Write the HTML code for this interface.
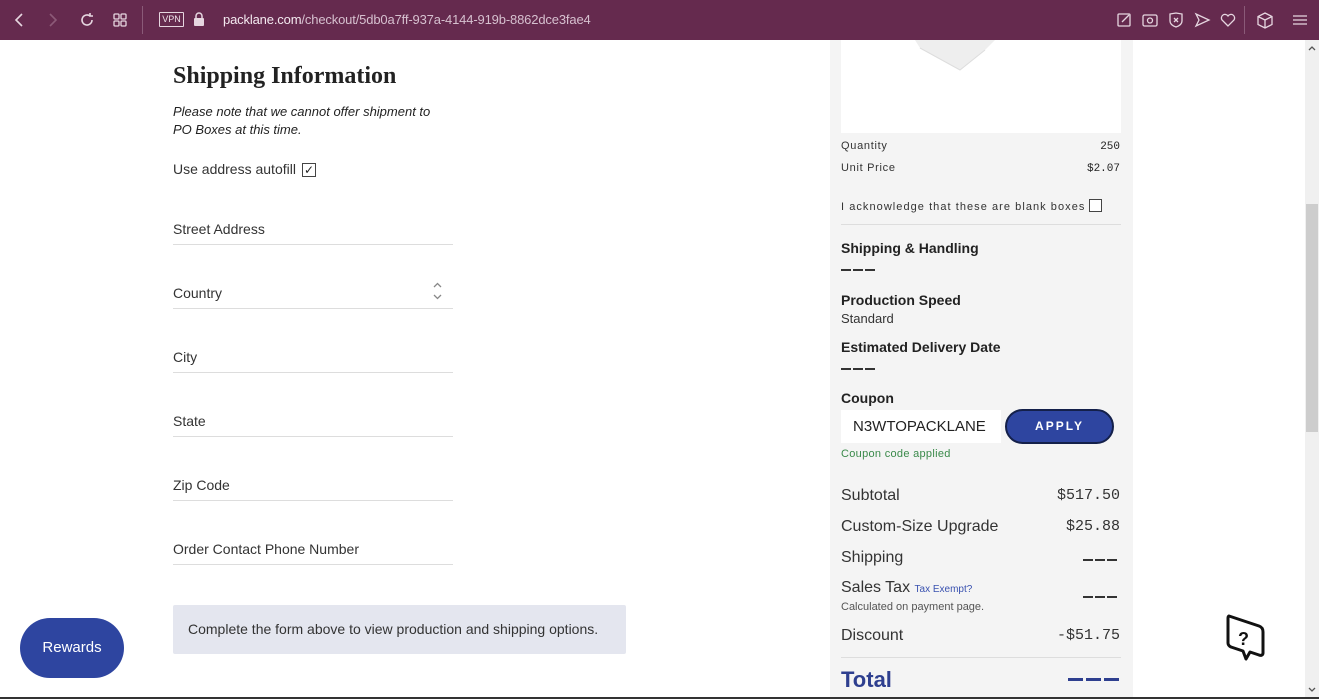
<!DOCTYPE html>
<html><head><meta charset="utf-8"><style>
*{margin:0;padding:0;box-sizing:border-box}
body{width:1319px;height:699px;overflow:hidden;background:#fff;font-family:"Liberation Sans",sans-serif;color:#222;position:relative}
.bar{position:absolute;left:0;top:0;width:1319px;height:40px;background:#652a4e;color:#f0e4ec}
.abs{position:absolute}
.lab{position:absolute;left:173px;width:280px;font-size:14px;color:#333;border-bottom:1px solid #ddd;padding-bottom:7px}
.side{position:absolute;left:830px;top:40px;width:303px;height:659px;background:#f4f4f4}
.mono{font-family:"Liberation Mono",monospace}
.sb{position:absolute;left:11px;font-size:14px;font-weight:bold;color:#222}
.row{position:absolute;left:11px;width:279px;font-size:16px;color:#333}
.row span.r{position:absolute;right:0;font-family:"Liberation Mono",monospace;font-size:15px}
.d{position:absolute;display:flex;gap:2px}
.d i{display:block;width:10px;height:1.5px;background:#333}
</style></head><body>
<div class="bar">
<svg class="abs" style="left:12px;top:12px" width="16" height="16" viewBox="0 0 16 16" fill="none" stroke="#e6d6e0" stroke-width="1.6"><path d="M10 2L4 8l6 6"/></svg>
<svg class="abs" style="left:44px;top:12px" width="16" height="16" viewBox="0 0 16 16" fill="none" stroke="#8c5a78" stroke-width="1.6"><path d="M6 2l6 6-6 6"/></svg>
<svg class="abs" style="left:78px;top:11px" width="18" height="18" viewBox="0 0 18 18" fill="none" stroke="#e6d6e0" stroke-width="1.6"><path d="M14 9a5 5 0 1 1-2-4"/><path d="M12 2v3h3"/></svg>
<svg class="abs" style="left:112px;top:12px" width="16" height="16" viewBox="0 0 16 16" fill="none" stroke="#e6d6e0" stroke-width="1.3"><rect x="2" y="2" width="5" height="5" rx="1"/><rect x="9" y="2" width="5" height="5" rx="1"/><rect x="2" y="9" width="5" height="5" rx="1"/><rect x="9" y="9" width="5" height="5" rx="1"/></svg>
<div class="abs" style="left:142px;top:6px;width:1px;height:28px;background:#8a5a78"></div>
<div class="abs" style="left:159px;top:12px;width:25px;height:15px;border:1px solid #e6d6e0;font-size:9px;line-height:13px;text-align:center;border-radius:1px">VPN</div>
<svg class="abs" style="left:193px;top:11px" width="12" height="16" viewBox="0 0 12 16"><path d="M3 7V5a3 3 0 0 1 6 0v2" fill="none" stroke="#e6d6e0" stroke-width="1.5"/><rect x="1" y="7" width="10" height="8" rx="1" fill="#e6d6e0"/></svg>
<div class="abs" style="left:223px;top:12px;font-size:13px;letter-spacing:-0.15px;color:#f4eaf0">packlane.com<span style="color:#d6c0cf">/checkout/5db0a7ff-937a-4144-919b-8862dce3fae4</span></div>
<svg class="abs" style="left:1115px;top:11px" width="200" height="18" viewBox="0 0 200 18" fill="none" stroke="#e6d6e0" stroke-width="1.3">
<rect x="3" y="3" width="12" height="12" rx="1"/><path d="M7 11l7-7"/>
<rect x="28" y="4" width="14" height="11" rx="1.5"/><circle cx="35" cy="9.5" r="2.5"/>
<path d="M55 3l6-1 6 1v7c0 3-3 5-6 6-3-1-6-3-6-6z"/><path d="M59 7l4 4M63 7l-4 4"/>
<path d="M81 3l13 6-13 6 3-6z"/>
<path d="M113 15l-6-6a3.5 3.5 0 0 1 6-4 3.5 3.5 0 0 1 6 4z"/>
<path d="M150 2l7 3.5v8L150 17l-7-3.5v-8z M143 5.5l7 3.5 7-3.5 M150 9v8"/>
<path d="M178 5h14M178 9h14M178 13h14"/>
</svg>
<div class="abs" style="left:1244px;top:6px;width:1px;height:28px;background:#8a5a78"></div>
</div>

<div class="abs" style="left:173px;top:63px;font-family:'Liberation Serif',serif;font-size:24px;font-weight:bold;color:#222">Shipping Information</div>
<div class="abs" style="left:173px;top:103px;font-size:13px;font-style:italic;line-height:18px;color:#222">Please note that we cannot offer shipment to<br>PO Boxes at this time.</div>
<div class="abs" style="left:173px;top:161px;font-size:14px;color:#333">Use address autofill</div>
<div class="abs" style="left:302px;top:163px;width:14px;height:14px;border:1px solid #444;font-size:12px;line-height:12px;text-align:center">✓</div>
<div class="lab" style="top:221px">Street Address</div>
<div class="lab" style="top:285px">Country</div>
<svg class="abs" style="left:432px;top:281px" width="11" height="20" viewBox="0 0 11 20" fill="none" stroke="#888" stroke-width="1.3"><path d="M2 6l3.5-3.5L9 6M2 14l3.5 3.5L9 14"/></svg>
<div class="lab" style="top:349px">City</div>
<div class="lab" style="top:413px">State</div>
<div class="lab" style="top:477px">Zip Code</div>
<div class="lab" style="top:541px">Order Contact Phone Number</div>
<div class="abs" style="left:173px;top:605px;width:453px;height:49px;background:#e4e6ef;border-radius:2px;font-size:14px;color:#333;padding:16px 15px">Complete the form above to view production and shipping options.</div>
<div class="abs" style="left:20px;top:618px;width:104px;height:60px;background:#2e45a0;border-radius:30px;color:#fff;font-size:15px;line-height:60px;text-align:center">Rewards</div>

<div class="side">
<div class="abs" style="left:11px;top:0;width:280px;height:93px;background:#fff"></div>
<svg class="abs" style="left:85px;top:0" width="120" height="32" viewBox="0 0 120 32"><path d="M0 0l5 8 40 22 25-20 10-10z" fill="#eee"/><path d="M5 8l40 22 25-20" fill="none" stroke="#ddd"/></svg>
<div class="abs" style="left:11px;top:100px;font-size:11px;letter-spacing:.7px;color:#333">Quantity</div>
<div class="abs mono" style="right:13px;top:101px;font-size:11px">250</div>
<div class="abs" style="left:11px;top:122px;font-size:11px;letter-spacing:.7px;color:#333">Unit Price</div>
<div class="abs mono" style="right:13px;top:123px;font-size:11px">$2.07</div>
<div class="abs" style="left:11px;top:161px;font-size:11px;letter-spacing:1.05px;color:#333">I acknowledge that these are blank boxes</div>
<div class="abs" style="left:259px;top:159px;width:13px;height:13px;border:1px solid #444;background:#fff"></div>
<div class="abs" style="left:11px;top:184px;width:280px;height:1px;background:#ddd"></div>
<div class="sb" style="top:200px">Shipping &amp; Handling</div>
<div class="d" style="left:11px;top:229px"><i></i><i></i><i></i></div>
<div class="sb" style="top:252px">Production Speed</div>
<div class="abs" style="left:11px;top:271px;font-size:13px;color:#333">Standard</div>
<div class="sb" style="top:299px">Estimated Delivery Date</div>
<div class="d" style="left:11px;top:328px"><i></i><i></i><i></i></div>
<div class="sb" style="top:350px">Coupon</div>
<div class="abs" style="left:11px;top:370px;width:160px;height:33px;background:#fff;font-size:15px;padding:8px 12px;color:#222">N3WTOPACKLANE</div>
<div class="abs" style="left:175px;top:369px;width:109px;height:35px;background:#2e45a0;border:2px solid #14204a;border-radius:18px;color:#fff;font-size:12px;font-weight:bold;letter-spacing:2px;text-align:center;line-height:31px">APPLY</div>
<div class="abs" style="left:11px;top:408px;font-size:11px;color:#3a8a4a;letter-spacing:.3px">Coupon code applied</div>
<div class="row" style="top:447px">Subtotal<span class="r">$517.50</span></div>
<div class="row" style="top:478px">Custom-Size Upgrade<span class="r">$25.88</span></div>
<div class="row" style="top:509px">Shipping</div>
<div class="d" style="left:253px;top:519px"><i></i><i></i><i></i></div>
<div class="row" style="top:539px">Sales Tax <span style="font-size:10px;color:#3a52b0">Tax Exempt?</span></div>
<div class="d" style="left:253px;top:556px"><i></i><i></i><i></i></div>
<div class="abs" style="left:11px;top:561px;font-size:11px;color:#555">Calculated on payment page.</div>
<div class="row" style="top:587px">Discount<span class="r">-$51.75</span></div>
<div class="abs" style="left:11px;top:617px;width:280px;height:1px;background:#ddd"></div>
<div class="abs" style="left:11px;top:627px;font-size:22px;font-weight:bold;color:#2e3f8f">Total</div>
<div class="d" style="left:238px;top:638px;gap:3px"><i style="width:15px;height:3px;background:#2e3f8f"></i><i style="width:15px;height:3px;background:#2e3f8f"></i><i style="width:15px;height:3px;background:#2e3f8f"></i></div>
</div>

<svg class="abs" style="left:1225px;top:613px" width="42" height="52" viewBox="0 0 42 52"><path d="M4 3l30 10c3 1 4 3 4 6v21c0 2-2 3-4 2l-9-3-4 7-3-8-12-4c-2-1-3-2-3-4V5c0-2 1-2 1-2z" fill="#fff" stroke="#111" stroke-width="3" stroke-linejoin="round"/><text x="13" y="32" font-family="Liberation Sans" font-weight="bold" font-size="18" fill="#111">?</text></svg>

<div class="abs" style="left:1305px;top:40px;width:14px;height:659px;background:#f0f0f0"></div>
<div class="abs" style="left:1306px;top:204px;width:12px;height:228px;background:#cdcdcd"></div>
<svg class="abs" style="left:1307px;top:44px" width="10" height="8" viewBox="0 0 10 8" fill="none" stroke="#555" stroke-width="1.3"><path d="M2 6l3-3 3 3"/></svg>
<svg class="abs" style="left:1307px;top:686px" width="10" height="8" viewBox="0 0 10 8" fill="none" stroke="#555" stroke-width="1.3"><path d="M2 2l3 3 3-3"/></svg>
<div class="abs" style="left:0;top:697px;width:1319px;height:2px;background:#333"></div>
</body></html>
